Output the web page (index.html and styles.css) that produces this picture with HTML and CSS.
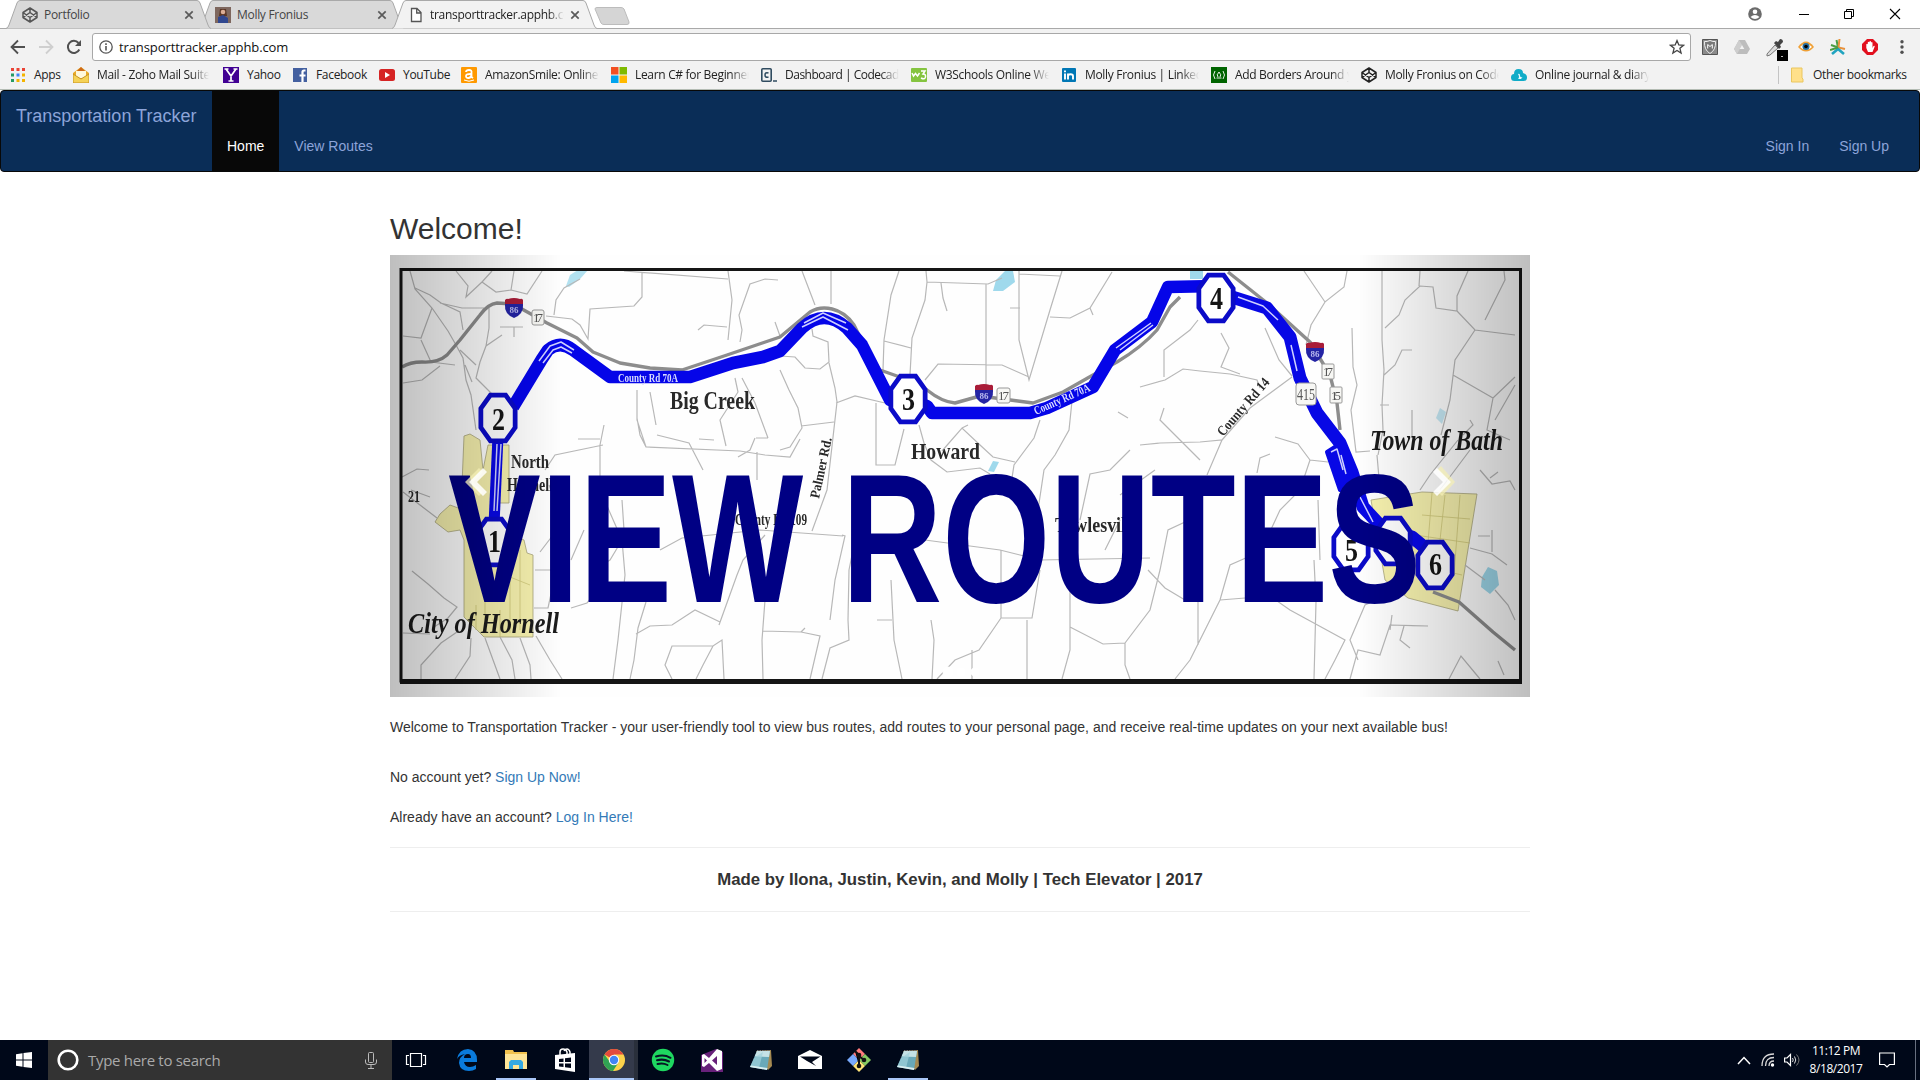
FILE: index.html
```html
<!DOCTYPE html>
<html lang="en">
<head>
<meta charset="utf-8">
<title>Transportation Tracker</title>
<link rel="stylesheet" href="styles.css">
</head>
<body>
<svg class="defs" width="0" height="0">
  <defs>
    <symbol id="tab-shape" viewBox="0 0 205 29"><path d="M0 28.5 Q2 28 3 25 L11 3 Q12 .5 14 .5 H191 Q193 .5 194 3 L202 25 Q203 28 205 28.5" stroke="#a9a9a9"/></symbol>
    <symbol id="close" viewBox="0 0 10 10"><path d="M1.3 1.3 8.7 8.7M8.7 1.3 1.3 8.7" stroke="#5a5a5a" stroke-width="1.7"/></symbol>
    <symbol id="codepen" viewBox="0 0 16 16"><path d="M8 1 15 5.5V10.500L8 15 1 10.500V5.500ZM8 1V5.500M8 10.500V15M1 5.500 8 10.500 15 5.500M1 10.500 8 5.500 15 10.500" fill="none" stroke="currentColor" stroke-width="1.5" stroke-linejoin="round"/></symbol>
    <symbol id="notepad" viewBox="0 0 24 24"><path d="M7 3 22 2 23 18 19 22Z" fill="#a58a52"/><path d="M8 3H21L18 22 1 19Z" fill="#69a9b9"/><path d="M8 3H21L20 9 5.500 8.500Z" fill="#c5e2e6"/><path d="M5 10 14 4 10 20 1 19Z" fill="#9fd2dc" opacity=".7"/><path d="M1 19 18 22 18.500 20 2 17.500Z" fill="#d9eef0"/><path d="M8 2.500H21" stroke="#777" stroke-dasharray="1.500 1"/></symbol>
    <symbol id="interstate" viewBox="0 0 20 22"><path d="M1 3Q3 1 4 2 10 0 16 2 18 1 19 3V9H1Z" fill="#a91c38"/><path d="M1 7H19Q20 17 10 21 0 17 1 7Z" fill="#2424a4"/><text x="10" y="16" font-size="9" text-anchor="middle" fill="#b9b9ef" font-weight="bold">86</text></symbol>
    <symbol id="stop" viewBox="0 0 42 54"><path d="M13 3H29L39 17V37L29 51H13L3 37V17Z" fill="#fff" stroke="#0b0bc8" stroke-width="5"/></symbol>
    <linearGradient id="shade-left"><stop offset="0" stop-opacity=".25"/><stop offset="1" stop-opacity="0"/></linearGradient>
    <linearGradient id="shade-right"><stop offset="0" stop-opacity="0"/><stop offset="1" stop-opacity=".25"/></linearGradient>
  </defs>
</svg>

<header class="browser">
  <div class="tab-strip">
    <div class="tab tab-first">
      <svg class="tab-bg"><use href="#tab-shape"/></svg>
      <svg class="icon tab-pen"><use href="#codepen"/></svg>
      <span class="tab-title">Portfolio</span>
      <svg class="tab-close"><use href="#close"/></svg>
    </div>
    <div class="tab">
      <svg class="tab-bg"><use href="#tab-shape"/></svg>
      <svg class="icon" viewBox="0 0 16 16"><path fill="#7e675e" d="M0 0h16v16H0z"/><path fill="#5b3726" d="M5 2h6l1 7H4z"/><circle cx="8" cy="5" r="2.300" fill="#dcae95"/><path fill="#30478f" d="M3 16V10L8 8l5 3v5z"/></svg>
      <span class="tab-title">Molly Fronius</span>
      <svg class="tab-close"><use href="#close"/></svg>
    </div>
    <div class="tab tab-active">
      <svg class="tab-bg"><use href="#tab-shape"/></svg>
      <svg class="icon" viewBox="0 0 16 16"><path d="M3.500 1.500H9L13 5.500V14.500H3.500ZM8.700 1.500V6H13" fill="#fff" stroke="#555" stroke-width="1.300"/></svg>
      <span class="tab-title">transporttracker.apphb.com</span>
      <svg class="tab-close"><use href="#close"/></svg>
    </div>
    <svg class="new-tab" viewBox="0 0 36 18"><path d="M3 .5H27Q29 .5 30 2L35 15Q35.500 17.500 33 17.500H10Q8 17.500 7 16L1 2Q1 .5 3 .5Z" fill="#d5d5d5" stroke="#bcbcbc"/></svg>
    <div class="window-buttons">
      <svg width="14" height="16" viewBox="0 0 14 16"><circle cx="7" cy="8" r="6.800" fill="#6b6b6b"/><circle cx="7" cy="5.700" r="2.300" fill="#fff"/><path d="M2.500 11Q7 7 11.500 11 7 15 2.500 11Z" fill="#fff"/></svg>
      <svg width="10" height="12" viewBox="0 0 10 12"><path d="M0 6.500H10" stroke="#000"/></svg>
      <svg width="10" height="12" viewBox="0 0 10 12"><path d="M.5 3.500h7v7h-7zM2.500 3V1.500h7v7H8" fill="none" stroke="#000"/></svg>
      <svg width="12" height="12" viewBox="0 0 12 12"><path d="M1 1 11 11M11 1 1 11" stroke="#000" stroke-width="1.100"/></svg>
    </div>
  </div>

  <div class="toolbar">
    <svg width="16" height="16" viewBox="0 0 16 16"><path d="M15 8H2M8 1.500 1.500 8 8 14.500" fill="none" stroke="#505050" stroke-width="1.800"/></svg>
    <svg width="16" height="16" viewBox="0 0 16 16"><path d="M1 8H14M8 1.500 14.500 8 8 14.500" fill="none" stroke="#cfcfcf" stroke-width="1.800"/></svg>
    <svg width="16" height="16" viewBox="0 0 16 16"><path d="M13.300 10.500A6 6 0 1 1 12.500 4" fill="none" stroke="#505050" stroke-width="2"/><path d="M15 1V7H9Z" fill="#505050"/></svg>
    <div class="omnibox">
      <svg width="14" height="14" viewBox="0 0 14 14"><circle cx="7" cy="7" r="6.200" fill="none" stroke="#555" stroke-width="1.300"/><path d="M7 6V10.500M7 3.300V4.900" stroke="#555" stroke-width="1.600"/></svg>
      <span class="url">transporttracker.apphb.com</span>
      <svg width="16" height="16" viewBox="0 0 16 16"><path d="M8 1.600 9.800 6 14.500 6.300 10.900 9.300 12.100 14 8 11.400 3.900 14 5.100 9.300 1.500 6.300 6.200 6Z" fill="none" stroke="#444" stroke-width="1.300"/></svg>
    </div>
    <div class="extensions">
      <svg viewBox="0 0 16 16"><path d="M.5.500h15v15H.5z" fill="#8b8b8b" stroke="#555"/><path d="M2.500 2.500Q5 3 8 1.500 11 3 13.500 2.500 14 11 8 14.500 2 11 2.500 2.500Z" fill="#777" stroke="#eee"/><path d="M5.700 9.500V5.500L8 7.500 10.300 5.500V9.500" fill="none" stroke="#fff"/></svg>
      <svg viewBox="0 0 16 16"><path d="M5 1H11L16 10 13 15H3L0 10Z" fill="#bdbdbd"/><path d="M5 1 8 6 3 15 0 10Z" fill="#cecece"/><path d="M8 6 10.300 10H5.700Z" fill="#f2f2f2"/></svg>
      <svg class="picker" viewBox="0 0 22 22"><path d="M1 15 9 6 12 9 4 16 1 17Z" fill="#ddd" stroke="#777"/><path d="M8 4 10 2 12 3 14 0Q17 0 17 3L14 6 15 8 13 10Z" fill="#444"/><path d="M11 11h11v11H11z"/><path d="M15 17.500h2" stroke="#bbb"/></svg>
      <svg viewBox="0 0 16 16"><path d="M0 8Q8-3 16 8 8 17 0 8Z" fill="#f0a035"/><path d="M2 8Q8 1.500 14 8 8 14 2 8Z" fill="#fff"/><circle cx="8" cy="7.500" r="3.500" fill="#246da0"/><circle cx="8" cy="7.500" r="1.800"/></svg>
      <svg viewBox="0 0 16 16"><g fill="none" stroke-width="2"><path d="M6.500 1 8 8.500 1 6" stroke="#4c9d44"/><path d="M9.500 0 8.500 8.500 15 10" stroke="#e8913b"/><path d="M2 15 8 10 14 15" stroke="#21a4c0" stroke-width="2.600"/><path d="M0 11 8 8.500" stroke="#4c9d44"/></g></svg>
      <svg viewBox="0 0 16 16"><path d="M5 0h6l5 5v6l-5 5H5l-5-5V5z" fill="#e2101f"/><path d="M4.300 9V5.200q.8-.8 1.500 0V8 3.200q.8-.8 1.600 0V7.500 2.500q.8-.8 1.600 0V7.500 3.500q.8-.8 1.500 0V9l1-2q1.300-.8 1.200.6L10.500 13H6Z" fill="#fff"/></svg>
      <svg viewBox="0 0 16 16"><g fill="#505050"><circle cx="8" cy="2.800" r="1.700"/><circle cx="8" cy="8" r="1.700"/><circle cx="8" cy="13.200" r="1.700"/></g></svg>
    </div>
  </div>

  <nav class="bookmarks">
    <a class="bm bm-apps"><svg class="icon" viewBox="0 0 16 16"><path fill="#ea4335" d="M1 1h3v3H1zM6.500 1h3v3h-3zM12 1h3v3h-3z"/><path fill="#279b63" d="M1 6.500h3v3H1zM1 12h3v3H1z"/><path fill="#4285f4" d="M6.500 6.500h3v3h-3z"/><path fill="#f4b400" d="M12 6.500h3v3h-3zM6.500 12h3v3h-3zM12 12h3v3h-3z"/></svg><span>Apps</span></a>
    <a class="bm bm-mail"><svg class="icon" viewBox="0 0 16 16"><path d="M8 0 16 6V16H0V6Z" fill="#e9a928"/><path d="M8 0 13 5H3Z" fill="#ce6a1a"/><path d="M3 4H13V11H3Z" fill="#fff8db"/><path d="M0 7 8 12 16 7V16H0Z" fill="#f5d257" stroke="#c89423"/></svg><span>Mail - Zoho Mail Suite</span></a>
    <a class="bm bm-yahoo"><svg class="icon" viewBox="0 0 16 16"><path fill="#410093" d="M0 0h16v16H0z"/><path d="M3 2 8 9 13 2M8 8V14M5.500 14h5M1.500 2h4M10.500 2h4" fill="none" stroke="#fff" stroke-width="1.700"/></svg><span>Yahoo</span></a>
    <a class="bm bm-facebook"><svg class="icon" viewBox="0 0 16 16"><path fill="#4460a0" d="M0 1h14v14H0z"/><path d="M12.500 3.500H11Q9.500 3.500 9.500 5V15M6.500 8.500h6" fill="none" stroke="#fff" stroke-width="2.200"/></svg><span>Facebook</span></a>
    <a class="bm bm-youtube"><svg class="icon" viewBox="0 0 16 16"><rect y="2" width="16" height="12" rx="2.500" fill="#d62424"/><path d="M6 5 11 8 6 11Z" fill="#fff"/></svg><span>YouTube</span></a>
    <a class="bm"><svg class="icon" viewBox="0 0 16 16"><rect width="16" height="16" rx="1" fill="#f90"/><path d="M5 5Q5 3 8 3T10.500 5.500V10L12 11M10 7Q5 6.800 5 9T7.500 11 10.500 8" fill="none" stroke="#fff" stroke-width="1.800"/><path d="M3 13Q8 15.500 13 13" fill="none" stroke="#fff"/></svg><span>AmazonSmile: Online</span></a>
    <a class="bm"><svg class="icon" viewBox="0 0 16 16"><path fill="#f25022" d="M0 0h7.500v7.500H0z"/><path fill="#7fba00" d="M8.500 0H16v7.500H8.500z"/><path fill="#00a4ef" d="M0 8.500h7.500V16H0z"/><path fill="#ffb900" d="M8.500 8.500H16V16H8.500z"/></svg><span>Learn C# for Beginners</span></a>
    <a class="bm bm-tight"><svg class="icon" viewBox="0 0 16 16"><rect x=".8" y="1.800" width="9.400" height="12.400" rx="1" fill="none" stroke="#304c60" stroke-width="1.600"/><path d="M7.500 6Q4 5 4 8T7.500 10M12 14h4" fill="none" stroke="#304c60" stroke-width="1.500"/></svg><span>Dashboard | Codecademy</span></a>
    <a class="bm"><svg class="icon" viewBox="0 0 16 16"><rect y="1" width="16" height="14" rx="1" fill="#85c440"/><path d="M1 6 2.500 9 4.500 6.500 6.500 9 8.500 6M10 4H14L12 7Q15 7 14.500 10T10 11" fill="none" stroke="#fff" stroke-width="1.500"/></svg><span>W3Schools Online Web</span></a>
    <a class="bm"><svg class="icon" viewBox="0 0 16 16"><rect x="1" y="1" width="14" height="14" rx="1" fill="#0077b5"/><path d="M4 6.500V12.500M4 3.500V5.200M7 12.500V6.500M7 9Q7 7.300 9.500 7.300T12 9V12.500" fill="none" stroke="#fff" stroke-width="1.900"/></svg><span>Molly Fronius | LinkedIn</span></a>
    <a class="bm"><svg class="icon" viewBox="0 0 16 16"><path fill="#006400" d="M0 0h16v16H0z"/><path d="M4 4Q1 8 4 12M12 4Q15 8 12 12M5.500 11h5M8 5Q5 8 7 10M8 5Q11 8 9 10" fill="none" stroke="#fff" stroke-width=".9"/></svg><span>Add Borders Around your</span></a>
    <a class="bm"><svg class="icon" viewBox="0 0 16 16"><use href="#codepen"/></svg><span>Molly Fronius on CodePen</span></a>
    <a class="bm"><svg class="icon" viewBox="0 0 16 16"><path d="M3.500 14Q0 14 0 10.500T3 7Q3 2 7.500 2T12 6Q16 7 16 10.500T12.500 14Z" fill="#10acc8"/><path d="M7 7Q9 6 9 8.500T11.500 10L10 12H7Q9 10 7 7Z" fill="#e7fbff"/></svg><span>Online journal &amp; diary</span></a>
    <a class="bm bm-other"><svg class="icon" viewBox="0 0 16 16"><path d="M.5 1H11V11L12 12V15H.5Z" fill="#ffe08a" stroke="#eac65e"/></svg><span>Other bookmarks</span></a>
  </nav>
</header>

<main class="page">
  <nav class="navbar">
    <a class="brand">Transportation Tracker</a>
    <a class="nav-link nav-active">Home</a>
    <a class="nav-link">View Routes</a>
    <div class="nav-right"><a class="nav-link">Sign In</a><a class="nav-link">Sign Up</a></div>
  </nav>

  <section class="content">
    <h2>Welcome!</h2>
    <svg class="map" viewBox="390 255 1140 442">
      <path fill="#fefefe" d="M390 255h1140v442H390z"/>
      <g class="artwork">
      <!-- towns -->
      <g fill="#f6f1ae" stroke="#aaa67c" stroke-width=".8">
        <path d="M464 436 470 434 480 440 483 470 488 445H509V503H497L500 530 524 540 527 553 533 555V637H484L464 617V540L460 530 448 532 435 522 440 514 450 505 461 509Z"/>
        <path d="M1371 500 1422 492 1477 494 1458 611 1408 598 1385 580Z"/>
      </g>
      <path d="M476 605v25M485 600v30M500 610v27M510 548v85M520 550v80M505 575l25 10M1422 515l48 4M1415 535l55 8M1432 493l-4 50M1445 495l-5 45M1460 495l-6 80M1440 570l22 5" fill="none" stroke="#cfc87a" stroke-width=".8"/>
      <g fill="#9fd9ec"><path d="M566 286 570 275 578 270H588L580 279 569 287Z" opacity=".8"/><path d="M993 291 996 280 1005 271H1013L1015 282 1003 291Z"/><path d="M1190 271h13v8h-13z"/><path d="M1482 577 1488 567 1497 571 1499 585 1490 594 1481 587Z"/><path d="M988 471 993 461 999 462 994 472Z"/><path d="M1436 418 1440 408 1446 412 1442 424Z" opacity=".6"/></g>
      <!-- local roads -->
      <g fill="none" stroke="#b8b8b8" stroke-width="1.200">
        <path d="M410 271 415 289 432 308 448 331 456 345 463 358 466 380 471 395 476 430M415 288 430 295 441 303 460 312 463 330M432 308 421 338 403 336M421 340 431 362 455 365M403 383 422 380 440 366M456 271 468 286 466 297 482 282 492 271M482 282 496 292 511 290 514 271M511 290 527 294 542 271M440 303 462 308 484 308M489 308 489 328 486 346M500 327H523M514 327V337M460 350 476 365M465 365 472 382M502 335 486 346 480 362 476 378 492 394"/>
        <path d="M554 315 556 300 564 288 580 279M546 316 572 319 580 325 588 339 590 309 634 306 642 297V272M624 271 728 279M728 271 732 300 728 340M740 342 742 330 739 315 750 284 765 279 778 280M698 330 704 325 727 327M775 322 780 336"/>
        <path d="M802 271 815 305M831 271V304M899 271 891 295 884 340 883 370M884 341 911 348M926 271 927 282 925 300 912 338 910 375M927 282 988 284 1002 278M941 283 943 298 947 311M986 284V385M1019 271V340L1029 380 1050 310 1062 271M1019 274 1060 276M1010 308H1020M1050 317 1070 318 1090 308 1112 272M1090 308 1093 315M1029 377 1002 365 938 364 925 380"/>
        <path d="M402 477 417 469 429 470M411 490 430 497M403 492 437 518M412 571 428 584 444 598 457 607 448 618 434 627M403 633 430 634M421 679 421 665 441 643 457 632M455 679 470 656 471 638M485 638 500 679M500 637 512 660 515 679M520 638 530 665 531 679M536 636 550 660 562 679M535 570h25M534 608h14l3-14"/>
        <path d="M780 356 795 357 805 368 820 369 829 362 828 342 813 336 812 329M829 363 835 388 837 402 827 490 812 531M780 370 789 390 798 408 802 428 790 447 780 450M801 426 834 422M836 403 855 396 885 403M876 403V465H895L904 429M919 425 924 443 931 460 947 472 980 468 990 474M942 451 962 428 980 445 993 457 1015 462M968 425 962 428M1040 420 1034 438 1014 465 1010 491M1072 401 1069 430 1055 455 1044 470 1038 510 1030 545"/>
        <path d="M637 390V420L646 447 740 451 765 455 790 457 800 439M646 447 640 435 637 418M657 435 689 443 703 470M650 392 656 425M735 378 738 392 720 420 726 446M742 378 755 403 768 438M768 438 756 438M755 438 750 450 738 457M757 452V480M699 439 714 440M604 425 600 445 600 490 622 540 625 575 618 640 613 679M578 439H600M545 470 555 455 603 445M549 485 559 510 553 535 540 552"/>
        <path d="M622 500 624 530M571 608 587 603 598 590M571 560 584 530M622 540 610 560 590 572M646 602 638 628 634 660 630 679M636 634 650 626 672 625 695 610 720 622M672 679 665 665 672 646H713L722 640 724 679M713 646 703 665 696 679M719 625 737 575 743 560 765 535M765 600 762 640 763 679M763 631 801 632 820 636 810 679M801 632 805 628M822 679 830 648 849 640 848 620 849 570 855 540M842 535 845 536 835 580 830 620M877 620h15M891 580 894 640 902 679M931 620 934 640 932 679M660 550 682 538 760 530 843 536M925 540 1000 550 1040 560 1150 558"/>
        <path d="M937 679 955 660 979 650 1001 618H1032L1040 570M972 679V650M1001 618V550M1027 620V679M1062 679 1070 650 1070 560M1070 627 1103 644 1125 643 1150 610 1160 570 1168 530 1200 515M1125 643V665L1130 679M1175 679 1190 660 1200 640 1220 600 1230 565 1248 557M1198 602V645M1220 600 1270 596 1290 610 1345 640 1335 660 1325 679M1314 679 1316 602 1314 560M1318 500 1320 560M1120 520 1105 550M1148 570 1165 588 1185 600"/>
        <path d="M1118 412 1128 418M1140 387 1165 380 1183 369 1200 371 1230 374 1257 380 1260 388M1164 377V350L1190 330 1198 320M1221 333 1229 348 1221 367 1240 374M1140 445 1160 443 1200 442 1222 440 1207 475M1222 440 1250 408 1292 377M1265 328 1279 360 1292 376M1164 408 1160 420 1200 460M1275 437 1298 444 1310 460 1328 462M1310 460 1300 490 1280 510 1268 536M1257 473 1260 458 1270 454M1155 470 1120 495M1130 450 1110 470 1090 474 1080 520"/>
        <path d="M1304 271 1325 302 1344 287 1347 271M1325 302 1311 325 1306 345M1352 328 1353 367 1357 385 1351 410 1356 452 1370 451M1382 271V340L1384 370 1382 405 1383 430 1378 455M1385 328 1399 315 1405 300 1420 286 1433 287 1436 308 1457 311 1457 296 1468 271M1419 286 1420 271M1457 311 1475 330 1515 335M1475 330 1455 360 1450 400 1441 435M1504 271 1505 280 1490 310 1485 320M1453 375 1493 398 1515 377M1493 398 1487 430 1510 440M1384 375 1395 365 1402 350 1412 350M1380 405H1389M1412 410V438M1470 420 1473 425 1463 435M1480 470 1492 484 1510 481 1515 490M1490 478 1498 472M1515 385 1495 420M1377 455 1380 490M1458 440 1430 475 1420 490M1470 450 1440 490"/>
        <path d="M1465 565 1485 580M1470 548 1492 554 1507 565M1478 536h12M1492 530v22M1495 590 1508 605 1515 620M1350 679 1358 650 1380 655 1390 625 1428 626M1404 626 1400 640 1410 648M1358 660 1350 640 1365 605 1388 595M1392 615 1390 630M1449 679 1461 656 1480 679M1498 661 1504 675"/>
      </g>
      <!-- highway -->
      <g fill="none" stroke="#8d8d8d" stroke-width="3.400" stroke-linejoin="round">
        <path d="M402 367Q410 362 422 362 438 363 447 355L460 340 480 315Q488 304 497 303L513 304 547 323 577 338 593 352 620 363 650 368 682 370 727 355 780 337 810 312Q820 306 832 309 845 312 854 325L863 343Q870 362 880 370L897 376 927 390 Q942 402 955 403L980 396 1033 403 1063 392 1093 375 1117 362Q1142 347 1157 330L1170 307 1180 297"/>
        <path d="M1228 272 1267 303 1310 342 1330 375 1337 403 1340 430M1433 592 1459 602 1493 632 1515 650"/>
      </g>
      <!-- bus route -->
      <g fill="none" stroke-linejoin="round">
        <path d="M513 407 542 359 548 350Q560 340 573 350L610 377H690L733 363 763 357 780 351 802 328Q824 308 847 328L862 345 890 400 908 399 927 406 932 413H1030L1047 408 1093 387 1115 350 1152 322 1168 287 1216 286" stroke="#0505e8" stroke-width="12.500"/>
        <path d="M1232 297 1267 308 1290 337 1300 378 1317 413 1340 443 1352 472 1363 507 1389 535 1412 537 1435 556" stroke="#0808e5" stroke-width="13"/>
        <path d="M1327 452 1338 445 1352 475 1340 490Z" fill="#0808e5" stroke="#0808e5" stroke-width="4"/>
        <path d="M498 436 494 525" stroke="#0808e5" stroke-width="11"/>
        <path d="M497 444 494 511M501 444 497 511M539 361 550 346 561 342 574 350M543 363 553 350 561 347 572 353M802 327 823 317 848 330M804 323 823 313 846 323M1116 348 1151 323M1120 350 1153 325M1238 297 1263 306 1278 320M1291 345 1297 371M1331 452 1337 449 1343 470M1341 455 1346 474M1360 497 1373 522" stroke="#cfd0ff" stroke-width="1.500"/>
      </g>
      <use href="#interstate" x="504" y="297" width="20" height="22"/>
      <use href="#interstate" x="974" y="383" width="20" height="22"/>
      <use href="#interstate" x="1305" y="341" width="20" height="22"/>
      <g fill="#f7f7f4" stroke="#999"><rect x="532" y="310" width="12" height="15" rx="2"/><rect x="997" y="388" width="13" height="15" rx="2"/><rect x="1322" y="364" width="12" height="15" rx="1"/><rect x="1330" y="387" width="12" height="16" rx="1"/><rect x="1296" y="383" width="20" height="22" rx="3"/></g>
      <g class="serif" font-size="13" fill="#555"><text x="533" y="322" textLength="10">17</text><text x="998" y="400" textLength="11">17</text><text x="1323" y="376" textLength="10">17</text><text x="1331" y="400" textLength="10">15</text><text x="1297" y="400" font-size="17" textLength="18" lengthAdjust="spacingAndGlyphs">415</text></g>
      <g><use href="#stop" x="478" y="392" width="40" height="52"/><use href="#stop" x="474" y="516" width="40" height="52"/><use href="#stop" x="888" y="373" width="40" height="52"/><use href="#stop" x="1196" y="272" width="40" height="52"/><use href="#stop" x="1331" y="521" width="40" height="52"/><use href="#stop" x="1373" y="515" width="40" height="52"/><use href="#stop" x="1415" y="539" width="40" height="52"/></g>
      <g class="serif bold" fill="#151515" font-size="31"><text x="492" y="430" textLength="13" lengthAdjust="spacingAndGlyphs">2</text><text x="488" y="552" textLength="13" lengthAdjust="spacingAndGlyphs">1</text><text x="902" y="410" textLength="13" lengthAdjust="spacingAndGlyphs">3</text><text x="1210" y="309" textLength="13" lengthAdjust="spacingAndGlyphs">4</text><text x="1345" y="561" textLength="13" lengthAdjust="spacingAndGlyphs">5</text><text x="1429" y="575" textLength="13" lengthAdjust="spacingAndGlyphs">6</text></g>
      <g class="serif bold" fill="#292929">
        <text x="670" y="409" font-size="25" textLength="85" lengthAdjust="spacingAndGlyphs">Big Creek</text>
        <text x="911" y="459" font-size="24" textLength="69" lengthAdjust="spacingAndGlyphs">Howard</text>
        <text x="511" y="468" font-size="18" textLength="38" lengthAdjust="spacingAndGlyphs">North</text>
        <text x="507" y="491" font-size="18" textLength="46" lengthAdjust="spacingAndGlyphs">Hornell</text>
        <text x="408" y="502" font-size="17" textLength="12" lengthAdjust="spacingAndGlyphs">21</text>
        <text x="735" y="525" font-size="16" textLength="72" lengthAdjust="spacingAndGlyphs">County Rd 109</text>
        <text x="1055" y="532" font-size="22" textLength="84" lengthAdjust="spacingAndGlyphs">Towlesville</text>
        <text transform="translate(819 499) rotate(-78)" font-size="14" textLength="62" lengthAdjust="spacingAndGlyphs">Palmer Rd.</text>
        <text transform="translate(1223 437) rotate(-49)" font-size="14" textLength="72" lengthAdjust="spacingAndGlyphs">County Rd 14</text>
        <g fill="#d9dcff"><text x="618" y="382" font-size="12" textLength="60" lengthAdjust="spacingAndGlyphs">County Rd 70A</text><text transform="translate(1036 415) rotate(-24)" font-size="12" textLength="60" lengthAdjust="spacingAndGlyphs">County Rd 70A</text></g>
        <g font-style="italic" fill="#1b1b1b"><text x="1370" y="450" font-size="30" textLength="133" lengthAdjust="spacingAndGlyphs">Town of Bath</text><text x="408" y="633" font-size="30" textLength="151" lengthAdjust="spacingAndGlyphs">City of Hornell</text></g>
      </g>
      <text x="448" y="602" class="headline" textLength="973" lengthAdjust="spacingAndGlyphs">VIEW ROUTES</text>
      <path d="M401 269.500H1520.500V681H401Z" fill="none" stroke="#151515" stroke-width="3"/><path d="M400 681.500H1522" stroke="#151515" stroke-width="5"/>
      </g>
      <path fill="url(#shade-left)" d="M390 255h171v442H390z"/><path fill="url(#shade-right)" d="M1359 255h171v442h-171z"/>
      <path class="chevron-shadow" d="M479 468 483 472 473 482 483 492 479 496 465 482ZM1441 466 1437 470 1448 481 1438 492 1442 496 1455 482Z"/>
      <path class="chevrons" d="M483 468 487 472 477 482 487 492 483 496 469 482ZM1437 468 1433 472 1443 482 1433 492 1437 496 1451 482Z"/>
      <g fill="#fff" stroke="#fff"><circle cx="948" cy="672" r="5"/><circle cx="961" cy="672" r="4"/><circle cx="975" cy="672" r="4"/></g>
    </svg>
    <p class="intro">Welcome to Transportation Tracker - your user-friendly tool to view bus routes, add routes to your personal page, and receive real-time updates on your next available bus!</p>
    <p class="account">No account yet? <a>Sign Up Now!</a></p>
    <p class="account">Already have an account? <a>Log In Here!</a></p>
    <footer>Made by Ilona, Justin, Kevin, and Molly | Tech Elevator | 2017</footer>
  </section>
</main>

<div class="taskbar">
  <div class="start"><svg width="16" height="16" viewBox="0 0 16 16"><path d="M0 2.200 6.500 1.300V7.500H0ZM7.500 1.100 16 0V7.500H7.500ZM0 8.500H6.500V14.700L0 13.800ZM7.500 8.500H16V16L7.500 14.900Z" fill="#fff"/></svg></div>
  <div class="search">
    <svg width="22" height="22" viewBox="0 0 22 22"><circle cx="11" cy="11" r="9.300" fill="none" stroke="#fff" stroke-width="2.600"/></svg>
    <span>Type here to search</span>
    <svg width="12" height="17" viewBox="0 0 12 17"><rect x="3.500" y=".5" width="5" height="10" rx="1" fill="none" stroke="#bbb"/><path d="M.5 7.500V10Q.5 12.500 3 12.500H9Q11.500 12.500 11.500 10V7.500M6 13V16M3 16.500H9" fill="none" stroke="#bbb"/></svg>
  </div>
  <div class="apps">
    <div class="app task-view"><svg viewBox="0 0 24 24"><path d="M6.500 5.500h11v13h-11zM5 7.500H2.500v9H5M19 7.500h2.500v9H19" fill="none" stroke="#fff" stroke-width="1.200"/></svg></div>
    <div class="app"><svg viewBox="0 0 24 24"><path d="M2 11Q4 1 13 1 22 2 22 12V14H9Q10 19 15 19 18 19 21 17V21Q18 23 14 23 5 23 4 15 4 9 10 6 4 7 2 11ZM9 10H16Q16 6 13 6 9 6 9 10Z" fill="#0a7bdc"/></svg></div>
    <div class="app running"><svg viewBox="0 0 24 24"><path d="M1 4V2H9L10 4H23V21H1Z" fill="#f2c24e"/><path d="M1 6H23V21H1Z" fill="#ffe596"/><path d="M5 21V14L7 12H17L19 14V21H15V17H9V21Z" fill="#35a9e2"/></svg></div>
    <div class="app"><svg viewBox="0 0 24 24"><path d="M7 8V4Q7 1 10 1T14 4V7M11 3Q12 1 14 1T17 4V7" fill="none" stroke="#fff" stroke-width="1.500"/><path d="M2 7 22 5V24L2 21Z" fill="#fff"/><path d="M6 11 10.500 10.500V14H6ZM12 10.300 18 9.500V14H12ZM6 15.500H10.500V19L6 18.500ZM12 15.500H18V20L12 19.200Z" fill="#000719"/></svg></div>
    <div class="app running chrome"><svg viewBox="0 0 24 24"><circle cx="12" cy="12" r="11" fill="#fdd24b"/><path d="M12 12 2.500 6.500A11 11 0 0 1 21.500 6.500H12Z" fill="#e34a3c"/><path d="M2.500 6.500A11 11 0 0 0 11 23L16.500 14.500 8 14Z" fill="#30a354"/><circle cx="12" cy="12" r="5.200" fill="#fff"/><circle cx="12" cy="12" r="4.200" fill="#4285f4"/></svg></div>
    <div class="app"><svg viewBox="0 0 24 24"><circle cx="12" cy="12" r="11.200" fill="#1ed760"/><path d="M5 8.500Q13 6 19.500 9.800M6 12.300Q12.500 10.500 18 13.500M6.500 16Q12 14.500 16.500 17" fill="none" stroke="#071525" stroke-width="2" stroke-linecap="round"/></svg></div>
    <div class="app"><svg viewBox="0 0 24 24"><path d="M1 7 16 1 23 4V24H1Z" fill="#68217a"/><path d="M17 1 22 3V21L17 23 9 15 4 19 2 18V7L4 6 9 10ZM17 8 12 12.500 17 17ZM4.500 10V15L7 12.500Z" fill="#fff" fill-rule="evenodd"/></svg></div>
    <div class="app"><svg><use href="#notepad"/></svg></div>
    <div class="app"><svg viewBox="0 0 24 24"><path d="M0 8 12 2 24 8V21H0Z" fill="#fff"/><path d="M2 8.500H22.500L14 14 18 18 9 13Z" fill="#000719"/></svg></div>
    <div class="app"><svg viewBox="0 0 24 24"><path fill="#ff7b7b" d="m12 0 6 6-6 6-6-6z"/><path fill="#78a9fc" d="m6 6 6 6-6 6-6-6z"/><path fill="#86c961" d="m18 6 6 6-6 6-6-6z"/><path fill="#ffe478" d="m12 12 6 6-6 6-6-6z"/><path d="M8 3 12 7V18M12 8 17 12" stroke="#111" stroke-width="2"/><g fill="#111"><circle cx="12" cy="7" r="2.300"/><circle cx="12" cy="18" r="2.300"/><circle cx="17" cy="12" r="2.300"/></g></svg></div>
    <div class="app running"><svg><use href="#notepad"/></svg></div>
  </div>
  <div class="tray">
    <svg width="14" height="9" viewBox="0 0 14 9"><path d="M1 8 7 1.500 13 8" fill="none" stroke="#fff" stroke-width="1.500"/></svg>
    <svg width="14" height="14" viewBox="0 0 14 14"><path d="M1 13Q1 1 13 1M4.500 13Q4.500 4.500 13 4.500M8 13Q8 8 13 8" fill="none" stroke="#d8d8d8" stroke-width="1.300"/><circle cx="11.500" cy="12" r="1.700" fill="#fff"/></svg>
    <svg width="17" height="14" viewBox="0 0 17 14"><path d="M.6 5H3L6.500 1.500V12.500L3 9H.6Z" fill="none" stroke="#fff" stroke-width="1.200"/><path d="M8.500 5Q10 7 8.500 9M10.500 3.500Q13 7 10.500 10.500" fill="none" stroke="#ddd"/><path d="M12.500 1.500Q17.500 7 12.500 12.500" fill="none" stroke="#777"/></svg>
    <div class="clock"><span>11:12 PM</span><span>8/18/2017</span></div>
    <svg width="16" height="16" viewBox="0 0 16 16"><path d="M.6 1H15.400V12.500H10.500L8 15 5.500 12.500H.6Z" fill="none" stroke="#fff" stroke-width="1.200"/></svg>
  </div>
</div>
</body>
</html>
```
FILE: styles.css
```css
* { box-sizing: border-box; }
body {
  margin: 0;
  width: 1920px;
  height: 1080px;
  display: flex;
  flex-direction: column;
  overflow: hidden;
  background: #fff;
  color: #333;
  font: 14px/20px "Liberation Sans", Arial, sans-serif;
}
svg { display: block; flex: none; }
.defs { position: absolute; }
.icon { width: 16px; height: 16px; }

/* Browser window */
.browser {
  height: 90px;
  flex: none;
  background: #f2f2f2;
  border-bottom: 1px solid #b4bcb4;
  font: 12px/18px "Open Sans", "Noto Sans", sans-serif;
  color: #222;
}
.tab-strip { height: 29px; display: flex; padding-left: 6px; background: linear-gradient(#fff 28px, #a9a9a9 28px); }
.tab { position: relative; width: 205px; height: 29px; display: flex; align-items: center; padding: 0 17px 0 16px; z-index: 1; color: #444; }
.tab + .tab { margin-left: -12px; }
.tab-first { z-index: 2; }
.tab-active { z-index: 3; color: #222; }
.tab-bg { position: absolute; inset: 0; width: 205px; height: 29px; fill: #d9d9d9; z-index: -1; }
.tab-active .tab-bg { fill: #f2f2f2; }
.tab-pen { color: #555; }
.tab-title { width: 134px; margin: 0 6px; overflow: hidden; white-space: nowrap; letter-spacing: -.3px; }
.tab-active .tab-title { mask-image: linear-gradient(90deg, #000 88%, transparent); }
.tab-close { width: 10px; height: 10px; margin: 1px 0 0; }
.new-tab { width: 36px; height: 18px; margin: 7px 0 0 -3px; }
.window-buttons { margin-left: auto; height: 27px; display: flex; align-items: center; padding-right: 19px; }
.window-buttons svg + svg { margin-left: 37px; }
.window-buttons svg:nth-child(3) { margin-left: 35px; }
.window-buttons svg:nth-child(4) { margin-left: 35px; }

.toolbar { height: 34px; display: flex; align-items: center; padding: 2px 10px 0; gap: 12px; }
.omnibox { width: 1600px; height: 28px; margin-left: -2px; display: flex; align-items: center; gap: 6px; padding: 0 5px 0 6px; background: #fff; border: 1px solid #a8a8a8; border-radius: 3px; }
.url { flex: 1; font-size: 13px; letter-spacing: -.1px; color: #111; }
.extensions { display: flex; gap: 16px; margin-left: -1px; }
.extensions svg { width: 16px; height: 16px; }
.extensions .picker { width: 22px; height: 22px; margin-right: -6px; margin-bottom: -6px; }

.bookmarks { display: flex; align-items: center; height: 24px; padding: 0 15px 0 10px; color: #222; }
.bm { display: flex; align-items: center; gap: 8px; width: 150px; flex: none; white-space: nowrap; letter-spacing: -.32px; }
.bm span { width: 114px; overflow: hidden; mask-image: linear-gradient(90deg, #000 84%, transparent); }
.bm-apps { width: 63px; }
.bm-mail { width: 150px; }
.bm-mail span { width: 112px; }
.bm-yahoo { width: 70px; }
.bm-facebook { width: 86px; gap: 7px; }
.bm-youtube { width: 82px; }
.bm-tight { letter-spacing: -.5px; }
.bm-apps span, .bm-yahoo span, .bm-facebook span, .bm-youtube span, .bm-other span { width: auto; mask-image: none; overflow: visible; }
.bm-other { width: 127px; margin-left: auto; padding-left: 12px; border-left: 1px solid #c4c4c4; gap: 6px; }

/* Site */
.page { flex: 1; min-height: 0; }
.navbar { height: 82px; display: flex; align-items: stretch; background: #0a2d57; border: 1px solid #080808; border-radius: 4px; color: #8da4d9; }
.brand { padding: 15px; width: 211px; font-size: 18px; white-space: nowrap; }
.nav-link { padding: 45px 15px 0; }
.nav-active { background: #080808; color: #fff; }
.nav-right { display: flex; margin-left: auto; padding-right: 15px; }
.content { width: 1140px; margin: 0 auto; }
h2 { margin: 40px 0 10px; font-size: 30px; line-height: 33px; font-weight: 500; }
.map { width: 1140px; height: 442px; }
.artwork { filter: blur(.55px); }
.serif, symbol text { font-family: "Liberation Serif", "Times New Roman", serif; }
.bold { font-weight: bold; }
.headline { font: bold 183px "Liberation Sans", Arial, sans-serif; fill: #000084; }
.chevrons { fill: #fff; opacity: .85; }
.chevron-shadow { fill: #f3eeb4; opacity: .75; }
p { margin: 0; }
.intro { margin: 20px 0 30px; letter-spacing: .004px; }
.account { margin-bottom: 20px; }
.account a { color: #337ab7; }
footer { height: 65px; border: solid #eee; border-width: 1px 0; text-align: center; font-size: 16.8px; line-height: 63px; font-weight: bold; }

/* Taskbar */
.taskbar { height: 40px; flex: none; display: flex; background: #000819; color: #fff; font-family: "Open Sans", "Noto Sans", sans-serif; }
.start { width: 48px; display: grid; place-items: center; }
.search { width: 344px; display: flex; align-items: center; padding: 0 15px 0 9px; gap: 9px; background: #333; color: #aaa; font-size: 15px; letter-spacing: -.3px; }
.search span { flex: 1; }
.apps { display: flex; }
.app { width: 49px; display: grid; place-items: center; }
.task-view { width: 50px; padding-right: 2px; }
.app svg { width: 24px; height: 24px; }
.running { background: linear-gradient(#a9c6f7, #a9c6f7) 50% 100% / 40px 2px no-repeat; }
.chrome { background: linear-gradient(#a9c6f7, #a9c6f7) 0 100% / 100% 2px no-repeat, #343a4b; box-shadow: inset -4px 0 #292f3b; }
.tray { margin-left: auto; display: flex; align-items: center; padding-right: 20px; border-right: 1px solid #687080; margin-right: 4px; gap: 10px; }
.tray svg:nth-child(3) { margin-left: -1px; }
.clock { width: 60px; margin: 0 8px 0 -4px; display: flex; flex-direction: column; align-items: center; font-size: 12px; line-height: 18px; letter-spacing: -.45px; position: relative; left: 5px; white-space: nowrap; }
.tray .clock + svg { margin-left: 0; }
.tray svg:nth-child(-n+3) { transform: translateX(6px); }
```
